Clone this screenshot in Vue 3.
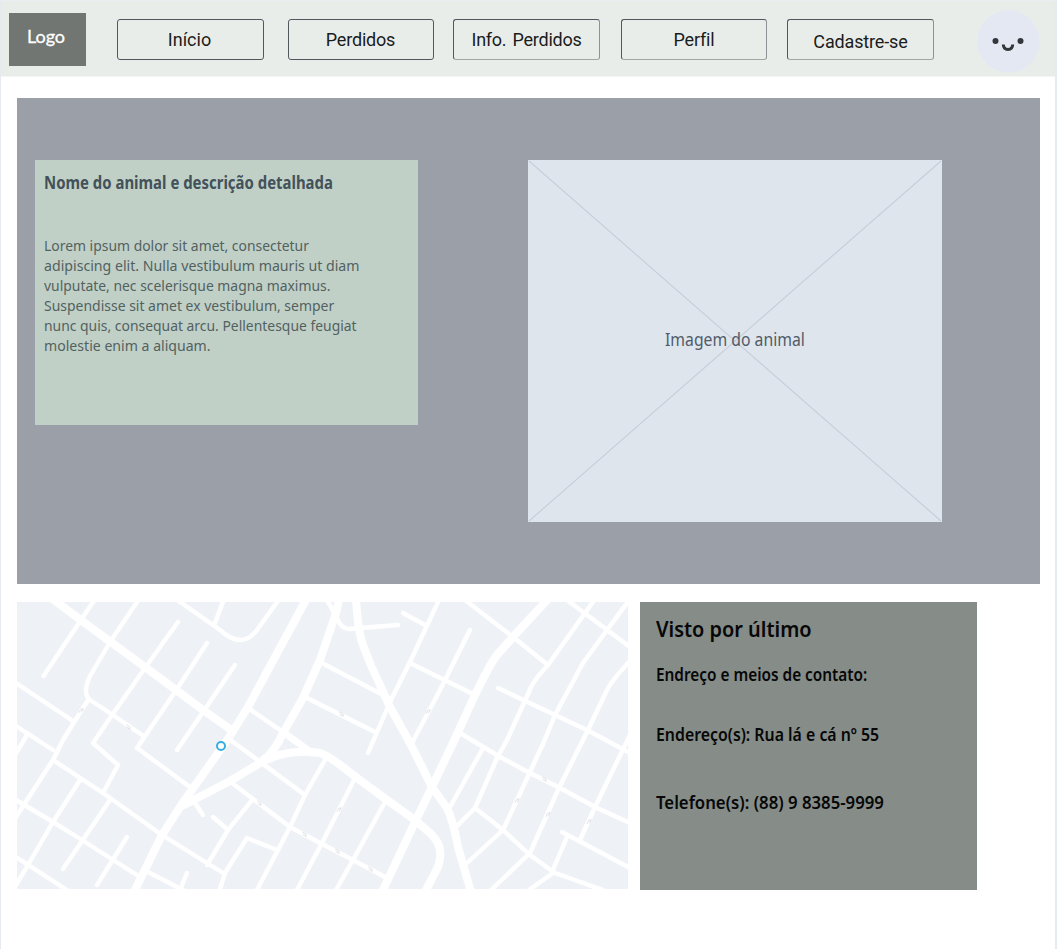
<script setup>
const navItems = [
  { id: 'inicio', label: 'Início' },
  { id: 'perdidos', label: 'Perdidos' },
  { id: 'info', label: 'Info. Perdidos' },
  { id: 'perfil', label: 'Perfil' },
  { id: 'cadastro', label: 'Cadastre-se' },
]

const description = [
  'Lorem ipsum dolor sit amet, consectetur',
  'adipiscing elit. Nulla vestibulum mauris ut diam',
  'vulputate, nec scelerisque magna maximus.',
  'Suspendisse sit amet ex vestibulum, semper',
  'nunc quis, consequat arcu. Pellentesque feugiat',
  'molestie enim a aliquam.',
]

const avenues = [
  'M50 597L82 621L145 667L203 710L230 729',
  'M307 598L248 707L228 739L218 753L182 804L162 835L134 892',
  'M339 598Q337 612 333 622L320 660L303 698L283 733Q274 753 263 760',
  'M356 598Q358 632 363 645Q370 665 380 685L390 707L410 743L432 787L447 808Q453 820 458 847L471 892',
  'M549 598L513 637L497 655Q490 664 475 695L453 743L432 787L415 822L382 892',
  'M182 806L230 781L260 763Q287 748 320 753Q330 756 353 775L387 800L415 820L431 834Q445 847 438 867L425 892',
]

const streets = [
  'M95 599L43.5 676',
  'M139 599L110 642L90 676Q82 694 90 700L110 713L142 735',
  'M88 700L63 740L53 760L25 803L16 817',
  'M178 622L145 668L110 718L93 743L118 765L103 793',
  'M207 643L175 692L137 748L190 787',
  'M235 665L203 712L177 750',
  'M16 683L73 721',
  'M16 726L53 750',
  'M27 735L16 753',
  'M176 599L220 630Q242 650 257 630L280 598',
  'M224 599L215 623',
  'M327 600L337 618Q341 629 349 629L398 625',
  'M403 613L425 625',
  'M439 600L410 662L390 702L368 753',
  'M410 663L475 695',
  'M320 662L383 695',
  'M305 697L377 733',
  'M470 630L440 690L412 743',
  'M465 600L513 637L548 665',
  'M595 599L548 665Q532 682 529 692L507 740L497 758L475 808L455 828',
  'M630 599L607 630L583 663L555 715L543 744L530 772L503 830L467 863',
  'M567 600L630 647',
  'M630 661Q612 680 607 690L587 732L558 790L530 853L491 890',
  'M498 688L555 715L587 730L630 753',
  'M460 733L500 757L530 773L560 788L595 807L630 823',
  'M630 735L595 807L580 840',
  'M482 750L450 807',
  'M475 808L503 830L530 855L555 873L603 890',
  'M553 873L529 890',
  'M567 837L552 872',
  'M562 832L630 868',
  'M53 760L103 793L162 835L223 873',
  'M16 800L53 822L82 840L110 858L140 877',
  'M80 780L53 822L28 865L16 885',
  'M110 800L63 869',
  'M127 837L97 885',
  'M16 857L67 890',
  'M195 803L203 815',
  'M213 817L228 830',
  'M252 800L228 830L207 865',
  'M148 872L183 890',
  'M187 873L180 890',
  'M277 850L247 838L225 873L219 892',
  'M232 783L290 827L322 844L353 860L385 877',
  'M325 760L305 795L290 827L257 890',
  'M355 778L322 843L297 890',
  'M385 802L353 860L336 890',
  'M229 739L263 764L305 795',
  'M248 708L283 732',
]

// Direction markers along one-way streets: x, y, rotation in degrees.
const markers = [
  [81, 711, -60], [128, 727, 33], [341, 714, 25], [428, 712, -60],
  [259, 803, 36], [304, 834, 28], [337, 851, 28], [370, 869, 28],
  [339, 810, -62], [544, 779, 27], [517, 801, -65], [548, 815, -65], [589, 822, -65],
]
</script>

<template>
  <div class="page">
    <header class="topbar">
      <div class="logo">Logo</div>
      <nav class="nav">
        <button v-for="item in navItems" :key="item.id" type="button" class="nav-btn" :class="item.id">
          {{ item.label }}
        </button>
      </nav>
      <svg class="avatar" viewBox="0 0 64 64" width="64" height="64">
        <circle cx="32.5" cy="32.5" r="31.2" fill="#e4e8f2" />
        <circle cx="19.5" cy="32" r="3" fill="#33363b" />
        <circle cx="44.5" cy="32" r="3" fill="#33363b" />
        <path d="M27.3 35.5Q27.5 40.4 32 40.4Q36.5 40.4 36.7 35.5" fill="none" stroke="#33363b" stroke-width="3" />
      </svg>
    </header>

    <section class="hero">
      <article class="info">
        <h1>Nome do animal e descrição detalhada</h1>
        <p>
          <span v-for="(line, i) in description" :key="i" class="line" :class="'l' + i">{{ line }}</span>
        </p>
      </article>
      <div class="photo">
        <svg viewBox="0 0 414 362" width="414" height="362">
          <path d="M1 1L413 361M413 1L1 361" stroke="#c5cedb" stroke-width="1.1" />
        </svg>
        <span>Imagem do animal</span>
      </div>
    </section>

    <section class="bottom">
      <svg class="map" viewBox="17 602 611 287" width="611" height="287">
        <rect x="17" y="602" width="611" height="287" fill="#eef2f7" />
        <g fill="none" stroke="#fff" stroke-linecap="round" stroke-linejoin="round">
          <path v-for="d in streets" :key="d" :d="d" stroke-width="4.4" />
          <path d="M283 732L312 753" stroke-width="7" />
          <path v-for="d in avenues" :key="d" :d="d" stroke-width="8" />
        </g>
        <g fill="none" stroke="#dcdde0" stroke-width="0.8">
          <path
            v-for="m in markers"
            :key="m.join()"
            d="M-2.5 -1H1.5L3 1H-1"
            :transform="`translate(${m[0]} ${m[1]}) rotate(${m[2]})`"
          />
        </g>
        <circle cx="221" cy="746" r="4" fill="#fff" stroke="#35aee2" stroke-width="2" />
      </svg>
      <aside class="contact">
        <h2>Visto por último</h2>
        <p class="lead">Endreço e meios de contato:</p>
        <p class="address">Endereço(s): Rua lá e cá nº 55</p>
        <p class="phone">Telefone(s): (88) 9 8385-9999</p>
      </aside>
    </section>
  </div>
</template>

<style>
body {
  background: #fff;
}
</style>

<style scoped>
.page {
  box-sizing: border-box;
  width: 1057px;
  height: 949px;
  overflow: hidden;
  border-top: 1px solid #e9edf4;
  border-left: 1px solid #e6e9ef;
  border-right: 2px solid #e6eaf1;
  background: #fff;
  font-family: "Noto Sans", sans-serif;
}
.topbar {
  display: flex;
  align-items: flex-start;
  box-sizing: border-box;
  height: 76px;
  padding: 9px 14px 0 8px;
  background: #e9edea;
  border-bottom: 1px solid #f3f5f3;
}
.logo {
  width: 77px;
  height: 53px;
  margin-top: 3px;
  background: #727672;
  color: #fff;
  font: 18px/47px Lato, sans-serif;
  -webkit-text-stroke: 0.3px #fff;
  text-align: center;
  text-indent: -3px;
}
.nav {
  display: flex;
  margin: 9px 0 0 31px;
}
.nav-btn {
  box-sizing: border-box;
  width: 147px;
  height: 41px;
  margin: 0;
  padding: 0;
  border: 1px solid #50575d;
  border-radius: 3px;
  background: transparent;
  color: #1a1c1c;
  font: 18px/39px Roboto, sans-serif;
  white-space: nowrap;
}
.inicio { padding-right: 2px; }
.perdidos { margin-left: 24px; width: 146px; padding-right: 1px; letter-spacing: -0.2px; }
.info.nav-btn { margin-left: 19px; letter-spacing: -0.25px; word-spacing: 2px; }
.perfil { margin-left: 21px; width: 146px; letter-spacing: -0.2px; }
.cadastro { margin-left: 20px; padding-top: 2px; letter-spacing: -0.15px; }
.info.nav-btn, .perfil, .cadastro {
  border-right-color: #8d9395;
  border-bottom-color: #a0a5a6;
}
.avatar {
  margin: -1px 0 0 42px;
  overflow: visible;
}
.hero {
  display: flex;
  align-items: flex-start;
  box-sizing: border-box;
  width: 1023px;
  height: 486px;
  margin: 21px 0 0 16px;
  padding: 62px 0 0 18px;
  background: #9b9fa7;
}
article.info {
  box-sizing: border-box;
  width: 383px;
  height: 265px;
  padding: 10px 9px;
  background: #c0d0c7;
  color: #43515a;
}
h1 {
  margin: 0;
  font-size: 17px;
  line-height: 26px;
  white-space: nowrap;
  transform: scaleX(0.878);
  transform-origin: left;
}
article p {
  margin: 39px 0 0;
  font-size: 15px;
  line-height: 20px;
  color: #53615f;
}
.line {
  display: block;
  white-space: nowrap;
  transform: scaleX(0.927);
  transform-origin: left;
}
.l1 { transform: scaleX(0.943); }
.l3 { transform: scaleX(0.931); }
.l5 { transform: scaleX(0.94); }
.photo {
  position: relative;
  display: flex;
  justify-content: center;
  width: 414px;
  height: 362px;
  margin-left: 110px;
  background: #dfe5ed;
  color: #505b69;
  font-size: 18px;
  line-height: 26px;
}
.photo svg {
  position: absolute;
  inset: 0;
}
.photo span {
  position: relative;
  height: 26px;
  margin-top: 166px;
  transform: scaleX(0.875);
}
.bottom {
  display: flex;
  margin: 18px 0 0 16px;
}
.contact {
  box-sizing: border-box;
  width: 337px;
  height: 288px;
  margin-left: 12px;
  padding: 10px 16px;
  background: #868c87;
  color: #060707;
  white-space: nowrap;
}
h2 {
  margin: 0;
  font-size: 22px;
  font-weight: 600;
  line-height: 32px;
  transform: scaleX(0.905);
  transform-origin: left;
}
.contact p {
  margin: 0;
  font-size: 17px;
  font-weight: 600;
  line-height: 24px;
  transform-origin: left;
}
.contact .lead { margin-top: 19px; transform: scaleX(0.903); }
.contact .address { margin-top: 36px; transform: scaleX(0.933); }
.contact .phone { margin-top: 44px; transform: scaleX(0.984); }
</style>
